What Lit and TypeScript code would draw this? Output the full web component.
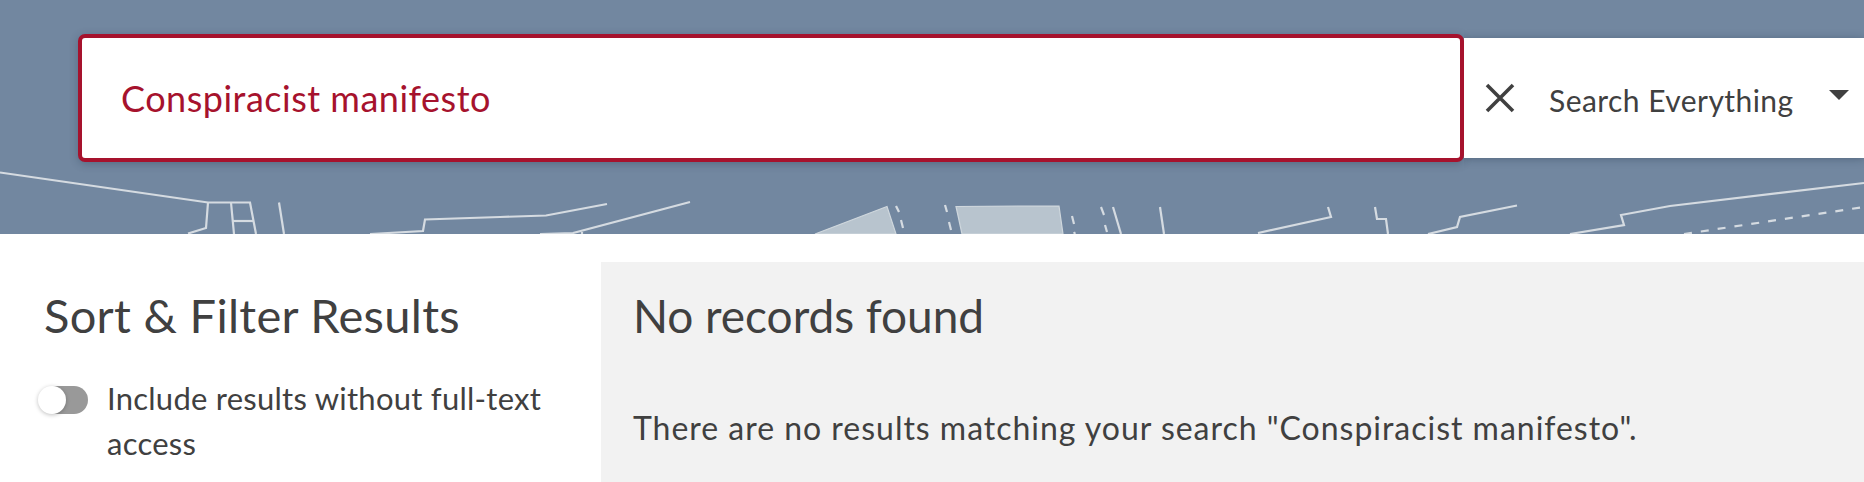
import { LitElement, html, css, svg } from "lit";
import { customElement } from "lit/decorators.js";

const lines = [
  "M0 172.5L208 202.5H250L256 234",
  "M208 202.5L206 228L188 233.5",
  "M231 202.5L234 234",
  "M233 221H253",
  "M279 202.5L284 234",
  "M370 234L423 231L425 219.5L500 217L546 215.5L607 204",
  "M540 234L573 233L690 202",
  "M582 232V234",
  "M1113 207L1121 234",
  "M1160 207L1164 234",
  "M1258 233L1331 217L1328 207",
  "M1375 207L1377 219H1386L1388 234",
  "M1428 234L1457 227L1460 217L1517 205.5",
  "M1570 234L1624 225L1621 215L1670 206L1864 183",
];
const dashes = [
  "M896 206L899 212", "M901 220L903 228", "M945 205L947 212", "M949 222L951 230",
  "M1072 216L1074 224", "M1074 232L1075 234", "M1101 207L1104 215", "M1105 225L1107 232",
];

@customElement("app-root")
export class AppRoot extends LitElement {
  static styles = css`
    :host {
      display: block;
      height: 482px;
      overflow: hidden;
      background: #fff;
      color: #404040;
      font-family: Lato, "Noto Sans", sans-serif;
    }
    .header {
      position: relative;
      height: 234px;
      box-sizing: border-box;
      padding: 34px 0 0 78px;
      background: #7287a0;
      display: flex;
      align-items: flex-start;
      overflow: hidden;
    }
    .map {
      position: absolute;
      left: 0;
      top: 0;
      width: 1864px;
      height: 234px;
    }
    .map path { fill: none; stroke: #d5dbe1; stroke-width: 2.2; }
    .map path.area { fill: #b8c4ce; stroke: #cfd7dd; stroke-width: 1.2; }
    .map path.dashed { stroke-dasharray: 8 9; }
    .search {
      position: relative;
      z-index: 2;
      width: 1386px;
      height: 128px;
      box-sizing: border-box;
      flex: none;
      background: #fff;
      border: 4px solid #a6122d;
      border-radius: 7px;
      box-shadow: 0 2px 8px rgba(30, 45, 65, 0.3);
      display: flex;
      align-items: center;
      padding: 0 0 0 39px;
      color: #a6122d;
      font-size: 36px;
      letter-spacing: 0.5px;
    }
    .tools {
      position: relative;
      z-index: 3;
      flex: 1;
      height: 120px;
      margin-top: 4px;
      background: #fff;
      box-shadow: 0 1px 8px rgba(30, 45, 65, 0.35);
      clip-path: inset(-14px 0 -14px 0);
      display: flex;
      align-items: center;
      padding-left: 20px;
      font-size: 30px;
      letter-spacing: 0.45px;
    }
    .tools svg.x { width: 32px; height: 32px; flex: none; margin-right: 33px; }
    .tools .label { white-space: nowrap; padding-top: 4px; }
    .caret {
      width: 0;
      height: 0;
      margin: 0 0 6px 35px;
      border-left: 10px solid transparent;
      border-right: 10px solid transparent;
      border-top: 10px solid #404040;
      flex: none;
    }
    .body { display: flex; align-items: stretch; height: 248px; }
    .side { width: 601px; flex: none; box-sizing: border-box; padding: 56px 50px 0 44px; }
    h2 {
      margin: 0;
      font-weight: 400;
      font-size: 47px;
      line-height: 50px;
      white-space: nowrap;
      letter-spacing: 0.3px;
    }
    .filter { display: flex; margin-top: 36px; font-size: 31px; line-height: 45px; letter-spacing: 0.25px; }
    .toggle {
      position: relative;
      width: 44px;
      height: 28px;
      flex: none;
      margin: 10px 19px 0 0;
      background: #999;
      border-radius: 14px;
    }
    .toggle::after {
      content: "";
      position: absolute;
      left: -6px;
      top: 0;
      width: 28px;
      height: 28px;
      border-radius: 50%;
      background: #fff;
      box-shadow: 0 1px 4px rgba(0, 0, 0, 0.25);
    }
    .main {
      flex: 1;
      margin-top: 28px;
      background: #f2f2f2;
      padding: 26px 0 0 32px;
    }
    .main h2 { line-height: 56px; font-size: 46px; letter-spacing: -0.05px; }
    .main p { margin: 64px 0 0; font-size: 32px; line-height: 40px; white-space: nowrap; letter-spacing: 0.98px; }
    .mark { width: 2px; height: 1px; margin: 34px 0 0 9px; background: #bbb; }
  `;

  render() {
    return html`
      <div class="header">
        <svg class="map" viewBox="0 0 1864 234" aria-hidden="true">
          <path class="area" d="M815 234L887 206.5L896 234Z"></path>
          <path class="area" d="M956 206.5L1059 206L1063 234H962Z"></path>
          ${lines.map((d) => svg`<path d=${d}></path>`)}
          ${dashes.map((d) => svg`<path d=${d}></path>`)}
          <path class="dashed" d="M1684 234L1864 207"></path>
        </svg>
        <div class="search">Conspiracist manifesto</div>
        <div class="tools">
          <svg class="x" viewBox="0 0 32 32" aria-hidden="true">
            <path d="M3 3L29 29M29 3L3 29" fill="none" stroke="#404040" stroke-width="3.6"></path>
          </svg>
          <span class="label">Search Everything</span>
          <span class="caret"></span>
        </div>
      </div>
      <div class="body">
        <div class="side">
          <h2>Sort &amp; Filter Results</h2>
          <div class="filter">
            <span class="toggle"></span>
            <span>Include results without full-text access</span>
          </div>
        </div>
        <div class="main">
          <h2>No records found</h2>
          <p>There are no results matching your search "Conspiracist manifesto".</p>
          <div class="mark"></div>
        </div>
      </div>
    `;
  }
}
